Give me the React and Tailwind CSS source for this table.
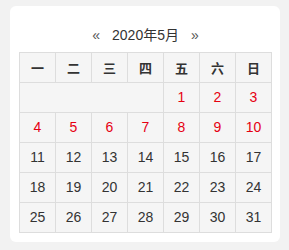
import React from "react";

const red = new Set([1,2,3,4,5,6,7,8,9,10]);

export default function App() {
  const heads = ["一","二","三","四","五","六","日"];
  const days = [];
  for (let d = 1; d <= 31; d++) days.push(d);
  return (
    <div className="w-[289px] h-[250px] bg-[#f2f2f2] pt-[6px] pl-[10px]" style={{fontFamily: '"Liberation Sans", Arial, "Noto Sans CJK SC", sans-serif'}}>
      <div className="w-[270px] h-[236px] bg-white rounded-[6px] pt-[19px] pl-[9px]">
        <div className="w-[253px] h-[20px] flex items-center justify-center gap-[12px] text-[14px] leading-[20px] text-[#333] mb-[7px]">
          <span className="text-[#555]">«</span>
          <span>2020年5月</span>
          <span className="text-[#555]">»</span>
        </div>
        <div className="w-[253px] bg-[#dddddd] p-px grid grid-cols-[repeat(7,35px)] auto-rows-[29px] gap-px">
          {heads.map((h) => (
            <div key={h} className="bg-[#f5f5f5] flex items-center justify-center text-[13px] font-bold text-[#333]" style={{fontFamily: '"Noto Sans CJK SC", sans-serif'}}>{h}</div>
          ))}
          <div className="col-span-4 bg-[#f5f5f5]"></div>
          {days.map((d) => (
            <div key={d} className={"bg-[#f5f5f5] flex items-center justify-center text-[14px] " + (red.has(d) ? "text-[#e60012]" : "text-[#333]")}>{d}</div>
          ))}
        </div>
      </div>
    </div>
  );
}
